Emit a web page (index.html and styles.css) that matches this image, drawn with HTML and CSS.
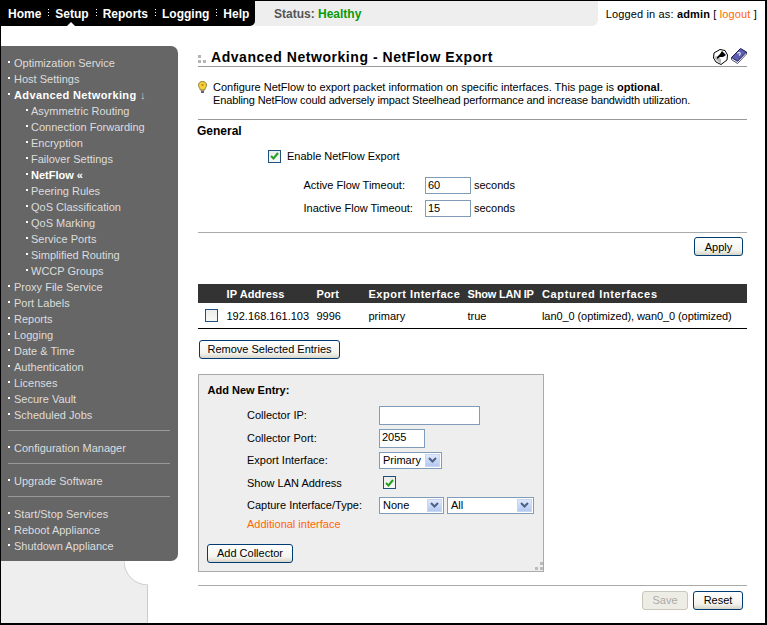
FILE: index.html
```html
<!DOCTYPE html>
<html lang="en">
<head>
<meta charset="utf-8">
<title>Advanced Networking - NetFlow Export</title>
<link rel="stylesheet" href="styles.css">
</head>
<body>
<div class="frame">
  <header class="topbar">
    <nav class="nav">
      <a class="nav-item">Home</a><a class="nav-item sep active">Setup</a><a class="nav-item sep">Reports</a><a class="nav-item sep">Logging</a><a class="nav-item sep">Help</a>
    </nav>
    <div class="status">Status: <span class="healthy">Healthy</span></div>
    <div class="user">Logged in as: <b>admin</b> [ <a class="link">logout</a> ]</div>
  </header>
  <div class="body">
    <aside class="side">
      <div class="menu">
        <ul class="group">
          <li>Optimization Service</li>
          <li>Host Settings</li>
          <li class="open">Advanced Networking <span class="arrow">↓</span></li>
          <li class="sub">Asymmetric Routing</li>
          <li class="sub">Connection Forwarding</li>
          <li class="sub">Encryption</li>
          <li class="sub">Failover Settings</li>
          <li class="sub current">NetFlow «</li>
          <li class="sub">Peering Rules</li>
          <li class="sub">QoS Classification</li>
          <li class="sub">QoS Marking</li>
          <li class="sub">Service Ports</li>
          <li class="sub">Simplified Routing</li>
          <li class="sub">WCCP Groups</li>
          <li>Proxy File Service</li>
          <li>Port Labels</li>
          <li>Reports</li>
          <li>Logging</li>
          <li>Date &amp; Time</li>
          <li>Authentication</li>
          <li>Licenses</li>
          <li>Secure Vault</li>
          <li>Scheduled Jobs</li>
        </ul>
        <ul class="group ruled"><li>Configuration Manager</li></ul>
        <ul class="group ruled"><li>Upgrade Software</li></ul>
        <ul class="group ruled">
          <li>Start/Stop Services</li>
          <li>Reboot Appliance</li>
          <li>Shutdown Appliance</li>
        </ul>
      </div>
      <div class="side-foot">
        <svg class="notch" width="24" height="24" viewBox="0 0 24 24"><path d="M0 0A24 24 0 0 0 24 24V0Z" fill="#fff"/><path d="M0 0A24 24 0 0 0 24 24" fill="none" stroke="#ccc"/></svg>
      </div>
    </aside>
    <main class="main">
      <div class="title-row">
        <svg class="title-dots" width="9" height="8" viewBox="0 0 9 8"><path d="M0 0h3v3H0zM0 5h3v3H0zM5 5h3v3H5z" fill="#b5b5b5"/></svg>
        <h1 class="title">Advanced Networking - NetFlow Export</h1>
        <svg class="tool pin" width="15" height="16" viewBox="0 0 15 16"><path d="M7 .5 12 1.500 14.500 6 14 11 8 15.500 3 13 .5 9 1 4Z" fill="#fff" stroke="#000"/><path d="M1 9 8 15 8 10 3 7Z" fill="#b8b8b8"/><path d="M4 8 7 5 9 2 13 6 10 8 7 8 4 10Z" fill="#000"/></svg>
        <svg class="tool book" width="16" height="16" viewBox="0 0 16 16"><path d="M.5 9.500 9.500 .5 15.500 4 6.500 13.500Z" fill="#5c5cb0" stroke="#1c1c50"/><path d="M.5 9.500 .5 11.500 6.500 15.500 15.500 6 15.500 4 6.500 13.500Z" fill="#fff" stroke="#1c1c50" stroke-width=".8"/><path d="M6.500 5.500C8.500 3.500 10.500 5 8 7.500" fill="none" stroke="#e4e4f4" stroke-width="1.200"/></svg>
      </div>
      <div class="intro">
        <svg class="bulb" width="9" height="13" viewBox="0 0 9 13"><path d="M4.500.5C2 .5.500 2.200.500 4.300.500 6 2 7 2.300 9H6.700C7 7 8.500 6 8.500 4.300 8.500 2.200 7 .5 4.500.5Z" fill="#f5d23c" stroke="#8a7a30"/><path d="M3 9.500H6V12H3Z" fill="#667"/><path d="M3.500 3H5.500V5H3.500Z" fill="#c98a10"/></svg>
        <p class="intro-text">Configure NetFlow to export packet information on specific interfaces. This page is <b>optional</b>.<br><span class="intro-second">Enabling NetFlow could adversely impact Steelhead performance and increase bandwidth utilization.</span></p>
      </div>
      <section class="general">
        <h2 class="section-title">General</h2>
        <label class="enable"><span class="check on"><svg width="9" height="8" viewBox="0 0 9 8"><path d="M1 4 3.500 6.500 8 1" fill="none" stroke="#21a121" stroke-width="2"/></svg></span>Enable NetFlow Export</label>
        <div class="timeouts">
          <span class="t-label">Active Flow Timeout:</span><span class="field f46">60</span><span>seconds</span>
          <span class="t-label">Inactive Flow Timeout:</span><span class="field f46">15</span><span>seconds</span>
        </div>
      </section>
      <div class="apply-row"><button class="btn apply">Apply</button></div>
      <table class="grid">
        <thead><tr><th class="c0"></th><th class="c1">IP Address</th><th class="c2">Port</th><th class="c3">Export Interface</th><th class="c4">Show LAN IP</th><th class="c5">Captured Interfaces</th></tr></thead>
        <tbody><tr><td class="c0"><span class="check"></span></td><td>192.168.161.103</td><td>9996</td><td>primary</td><td>true</td><td class="c5">lan0_0 (optimized), wan0_0 (optimized)</td></tr></tbody>
      </table>
      <div class="remove-row"><button class="btn remove">Remove Selected Entries</button></div>
      <section class="entry">
        <h3 class="entry-title">Add New Entry:</h3>
        <div class="entry-form">
          <span class="e-label">Collector IP:</span><div class="e-val"><span class="field f101"></span></div>
          <span class="e-label">Collector Port:</span><div class="e-val"><span class="field f46">2055</span></div>
          <span class="e-label">Export Interface:</span><div class="e-val"><span class="sel s63">Primary<i class="drop"><svg width="9" height="6" viewBox="0 0 9 6"><path d="M1 1 4.500 4.500 8 1" fill="none" stroke="#4d6185" stroke-width="2"/></svg></i></span></div>
          <span class="e-label">Show LAN Address</span><div class="e-val"><span class="check on boxed"><svg width="9" height="8" viewBox="0 0 9 8"><path d="M1 4 3.500 6.500 8 1" fill="none" stroke="#21a121" stroke-width="2"/></svg></span></div>
          <span class="e-label">Capture Interface/Type:</span><div class="e-val"><span class="sel s65">None<i class="drop"><svg width="9" height="6" viewBox="0 0 9 6"><path d="M1 1 4.500 4.500 8 1" fill="none" stroke="#4d6185" stroke-width="2"/></svg></i></span><span class="sel s87">All<i class="drop"><svg width="9" height="6" viewBox="0 0 9 6"><path d="M1 1 4.500 4.500 8 1" fill="none" stroke="#4d6185" stroke-width="2"/></svg></i></span></div>
        </div>
        <a class="link additional">Additional interface</a>
        <button class="btn add">Add Collector</button>
        <svg class="grip" width="8" height="8" viewBox="0 0 8 8"><path d="M5 0h3v3H5zM5 5h3v3H5zM0 5h3v3H0z" fill="#bbb"/></svg>
      </section>
      <div class="foot-row"><button class="btn save" disabled>Save</button><button class="btn reset">Reset</button></div>
    </main>
  </div>
</div>
</body>
</html>
```
FILE: styles.css
```css
* { box-sizing: border-box; }
html, body { margin: 0; padding: 0; }
body { width: 767px; height: 625px; overflow: hidden; background: #fff; font: 11px/13px "Liberation Sans", Arial, sans-serif; color: #000; }
.frame { width: 767px; height: 625px; border: solid #000; border-width: 1px 2px 2px 1px; display: flex; flex-direction: column; overflow: hidden; }
ul { list-style: none; margin: 0; padding: 0; }

.topbar { display: flex; height: 25px; flex: none; background: #fff; }
.nav { width: 254px; flex: none; background: #000; display: flex; padding-left: 7px; border-radius: 0 0 5px 0; font-weight: bold; font-size: 12px; line-height: 26px; color: #fff; }
.nav-item { margin-right: 7px; white-space: nowrap; }
.nav-item.sep { padding-left: 7px; background: repeating-linear-gradient(#fff 0 1px, transparent 1px 3px) 0 8px / 1px 9px no-repeat; }
.nav-item.active { position: relative; }
.nav-item.active::after { content: ""; position: absolute; left: 19px; bottom: 0; border: 4px solid transparent; border-top: 0; border-bottom-color: #fff; }
.status { width: 343px; flex: none; padding-left: 19px; background: #eee; border-radius: 0 0 6px 0; font-weight: bold; font-size: 12px; line-height: 27px; color: #555; }
.healthy { color: #0a9a0a; }
.user { flex: 1; text-align: right; padding-right: 8px; line-height: 27px; font-size: 11px; letter-spacing: .15px; white-space: nowrap; }
.link { color: #f60; }

.body { flex: 1; display: flex; min-height: 0; }
.side { width: 177px; flex: none; display: flex; flex-direction: column; padding-top: 20px; margin-right: 20px; }
.menu { background: #666; width: 177px; height: 515px; padding: 9px 8px 0 7px; border-radius: 0 7px 7px 0; color: #ddd; }
.group li { height: 16px; line-height: 16px; padding-left: 6px; background: linear-gradient(#fff, #fff) 0 6px / 2px 2px no-repeat; white-space: nowrap; }
.group li.sub { margin-left: 18px; padding-left: 5px; }
.group li.open, .group li.current { font-weight: bold; color: #fff; }
.group li.open { letter-spacing: .37px; }
.arrow { font-weight: normal; color: #ccc; }
.ruled { margin-top: 7px; padding-top: 9px; border-top: 1px solid #999; }
.side-foot { width: 147px; flex: 1; background: #eee; border-right: 1px solid #ccc; position: relative; }
.notch { position: absolute; right: -1px; top: 0; }

.main { width: 549px; flex: none; display: flex; flex-direction: column; }
.title-row { display: flex; align-items: flex-start; height: 21px; margin-top: 20px; border-bottom: 1px solid #999; }
.title { flex: 1; margin: 1px 0 0 4px; font-size: 14px; line-height: 20px; font-weight: bold; letter-spacing: .55px; }
.title-dots { margin-top: 9px; }
.pin { margin-top: 3px; }
.book { margin: 2px 0 0 3px; }
.intro { display: flex; margin-top: 14px; height: 38px; }
.bulb { flex: none; }
.intro-text { margin: 0 0 0 6px; font-size: 11px; line-height: 13px; white-space: nowrap; }
.intro-second { letter-spacing: -.13px; }

.general { border-top: 1px solid #999; height: 114px; border-bottom: 1px solid #aaa; }
.section-title { margin: 4px 0 0 -1px; font-size: 12px; line-height: 14px; }
.enable { display: flex; align-items: center; margin: 11px 0 0 70px; height: 14px; }
.check { display: inline-flex; width: 13px; height: 13px; border: 1px solid #1c5180; background: linear-gradient(#ececec, #f8f8f4); align-items: center; justify-content: center; flex: none; }
.enable .check { margin-right: 6px; }
.timeouts { display: grid; grid-template-columns: 121.500px 46px auto; grid-template-rows: 17px 17px; row-gap: 6px; align-items: center; margin: 14px 0 0 105.500px; width: 240px; }
.timeouts span:nth-child(3n) { margin-left: 3px; }
.field { display: block; border: 1px solid #7f9db9; background: #fff; height: 100%; padding: 0 2px; line-height: 15px; }
.f46 { width: 46px; }
.f101 { width: 101px; }

.btn { font: 11px/15px "Liberation Sans", Arial, sans-serif; color: #000; border: 1px solid #003c74; border-radius: 3px; background: linear-gradient(#fff, #f4f4ee 70%, #d8d4c8); padding: 1px 0 0; height: 19px; }
.apply-row { display: flex; justify-content: flex-end; padding: 4px 4px 0 0; height: 51px; }
.apply { width: 49px; }

.grid { border-collapse: collapse; width: 549px; table-layout: fixed; border-bottom: 1px solid #000; }
.grid th { background: #333; color: #fff; text-align: left; height: 19px; padding: 1px 0 0; font-size: 11px; line-height: 18px; white-space: nowrap; letter-spacing: .1px; }
.grid th.c3 { letter-spacing: .5px; }
.grid th.c4 { letter-spacing: -.2px; }
.grid th.c5 { letter-spacing: .65px; }
.grid td { height: 25px; padding: 2px 0 0; white-space: nowrap; }
.grid td.c5 { letter-spacing: -.08px; }
.c0 { width: 28.500px; }
.grid td.c0 { padding: 0 0 0 7px; }
.grid .check { vertical-align: middle; }
.c1 { width: 90px; }
.c2 { width: 52px; }
.c3 { width: 99px; }
.c4 { width: 74.500px; }
.remove-row { padding: 11px 0 0 1px; height: 45px; }
.remove { width: 141px; }

.entry { position: relative; width: 346px; height: 198px; background: #eee; border: 1px solid #aaa; padding: 8px 0 0 8px; display: flex; flex-direction: column; align-items: flex-start; }
.entry-title { margin: 0 0 0 .5px; font-size: 11px; line-height: 14px; }
.entry-form { display: grid; grid-template-columns: 132px auto; grid-template-rows: 19px 19px 17px 20px 17px; row-gap: 4px; margin: 9px 0 0 40px; align-items: center; }
.e-label { white-space: nowrap; padding-top: 1px; }
.e-val { display: flex; gap: 3px; height: 100%; align-items: center; }
.sel { display: flex; align-items: center; height: 17px; border: 1px solid #7f9db9; background: #fff; padding: 0 1px 0 3px; justify-content: space-between; }
.s63 { width: 63px; }
.s65 { width: 65px; }
.s87 { width: 87px; }
.drop { display: flex; width: 15px; height: 13px; align-items: center; justify-content: center; background: linear-gradient(#dfe8fb, #b4c8f2); border: 1px solid #c8d6f0; }
.boxed { margin-left: 4px; }
.additional { margin: 3px 0 0 40px; line-height: 14px; }
.add { margin-top: 13px; width: 86px; }
.grip { position: absolute; right: 0; bottom: 1px; }
.foot-row { border-top: 1px solid #aaa; margin-top: 13px; display: flex; justify-content: flex-end; gap: 5px; padding: 5px 4px 0 0; }
.save { width: 46px; color: #aaa; border-color: #c9c7ba; background: #eeede5; }
.reset { width: 50px; }
```
